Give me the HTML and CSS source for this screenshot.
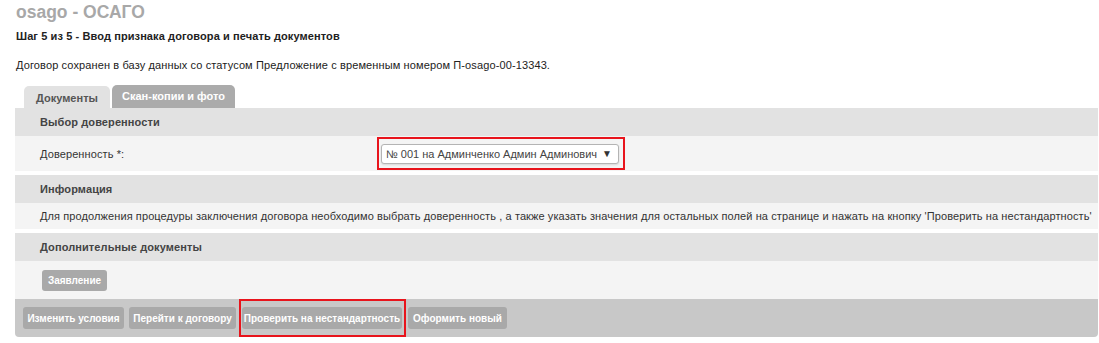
FILE: index.html
```html
<!DOCTYPE html>
<html lang="ru">
<head>
<meta charset="utf-8">
<title>osago - ОСАГО</title>
<link rel="stylesheet" href="styles.css">
</head>
<body>
<div class="page">
  <h1 class="title">osago - ОСАГО</h1>
  <div class="step">Шаг 5 из 5 - Ввод признака договора и печать документов</div>
  <div class="status">Договор сохранен в базу данных со статусом Предложение с временным номером П-osago-00-13343.</div>

  <div class="tabs">
    <div class="tab tab-active">Документы</div>
    <div class="tab tab-inactive">Скан-копии и фото</div>
  </div>

  <div class="panel">
    <div class="group">
      <div class="sec-head">Выбор доверенности</div>
      <div class="row row-form">
        <div class="label">Доверенность *:</div>
        <div class="annot annot-select">
          <div class="select">
            <span class="select-text">№ 001 на Админченко Админ Админович</span>
            <span class="select-arrow">▼</span>
          </div>
        </div>
      </div>
    </div>

    <div class="group">
      <div class="sec-head">Информация</div>
      <div class="row row-info">Для продолжения процедуры заключения договора необходимо выбрать доверенность , а также указать значения для остальных полей на странице и нажать на кнопку 'Проверить на нестандартность'</div>
    </div>

    <div class="group">
      <div class="sec-head">Дополнительные документы</div>
      <div class="row row-docs">
        <span class="btn btn-small">Заявление</span>
      </div>
      <div class="bar">
        <span class="btn btn-w1">Изменить условия</span>
        <span class="btn btn-w2">Перейти к договору</span>
        <div class="annot annot-btn">
          <span class="btn btn-w3">Проверить на нестандартность</span>
        </div>
        <span class="btn btn-w4">Оформить новый</span>
      </div>
    </div>
  </div>
</div>
</body>
</html>
```

FILE: styles.css
```css
* { box-sizing: border-box; }

body {
  margin: 0;
  background: #fff;
  font-family: "Liberation Sans", Arial, sans-serif;
  color: #333;
}

.page {
  padding: 2px 1px 0 15px;
}

.title {
  margin: 0;
  font-size: 17.5px;
  line-height: 20px;
  font-weight: bold;
  color: #a8a8a8;
  padding-left: 1px;
}

.step {
  margin-top: 7px;
  font-size: 11px;
  line-height: 14px;
  font-weight: bold;
  color: #222;
  padding-left: 1px;
  letter-spacing: 0.1px;
}

.status {
  margin-top: 15px;
  font-size: 11px;
  line-height: 14px;
  color: #222;
  padding-left: 1px;
  letter-spacing: 0.12px;
}

.tabs {
  margin-top: 13px;
  padding-left: 9px;
  display: flex;
  align-items: flex-end;
  gap: 2px;
  height: 23px;
}

.tab {
  font-size: 11px;
  font-weight: bold;
  border-radius: 5px 5px 0 0;
  text-align: center;
}

.tab-active {
  background: #e2e2e2;
  color: #555;
  width: 86px;
  height: 22px;
  line-height: 24px;
}

.tab-inactive {
  background: #ababab;
  color: #fff;
  width: 123px;
  height: 23px;
  line-height: 22px;
}

.group + .group {
  margin-top: 4px;
}

.sec-head {
  height: 28px;
  line-height: 28px;
  background: #e2e2e2;
  padding-left: 25px;
  font-size: 11px;
  font-weight: bold;
  color: #444;
  letter-spacing: 0.1px;
}

.row {
  background: #f4f4f4;
  font-size: 11px;
  color: #333;
  letter-spacing: 0.1px;
}

.row-form {
  height: 35px;
  display: flex;
  align-items: center;
  padding-left: 25px;
}

.label {
  width: 337px;
}

.annot {
  border: 2px solid #e8141c;
}

.annot-select {
  padding: 5px 4px 4px 2px;
  margin-top: -1px;
}

.select {
  width: 238px;
  height: 20px;
  background: #fff;
  border: 1px solid #b4b4b4;
  border-radius: 3px;
  box-shadow: 0 1px 2px rgba(0, 0, 0, 0.12);
  display: flex;
  align-items: center;
  justify-content: space-between;
  padding: 0 6px 0 4px;
  font-size: 11px;
  color: #444;
  white-space: nowrap;
  letter-spacing: 0;
}

.select-arrow {
  font-size: 10px;
  color: #333;
  letter-spacing: 0;
}

.row-info {
  height: 26px;
  line-height: 26px;
  padding-left: 25px;
  white-space: nowrap;
}

.row-docs {
  height: 38px;
  display: flex;
  align-items: center;
  padding-left: 27px;
}

.btn {
  display: inline-flex;
  align-items: center;
  justify-content: center;
  height: 22px;
  background: #a9a9a9;
  color: #fff;
  font-size: 10px;
  font-weight: bold;
  border-radius: 3px;
  white-space: nowrap;
  letter-spacing: 0;
}

.btn-small {
  width: 65px;
  height: 21px;
}

.btn-w1 { width: 101px; }
.btn-w2 { width: 107px; }
.btn-w3 { width: 160px; }
.btn-w4 { width: 99px; }

.bar {
  height: 38px;
  background: #c8c8c8;
  border-radius: 0 0 4px 4px;
  display: flex;
  align-items: center;
  gap: 5px;
  padding-left: 8px;
}

.annot-btn {
  align-self: stretch;
  display: flex;
  align-items: center;
  padding: 0 2px 0 1px;
  margin: 0 -3px 0 -2px;
}
```
